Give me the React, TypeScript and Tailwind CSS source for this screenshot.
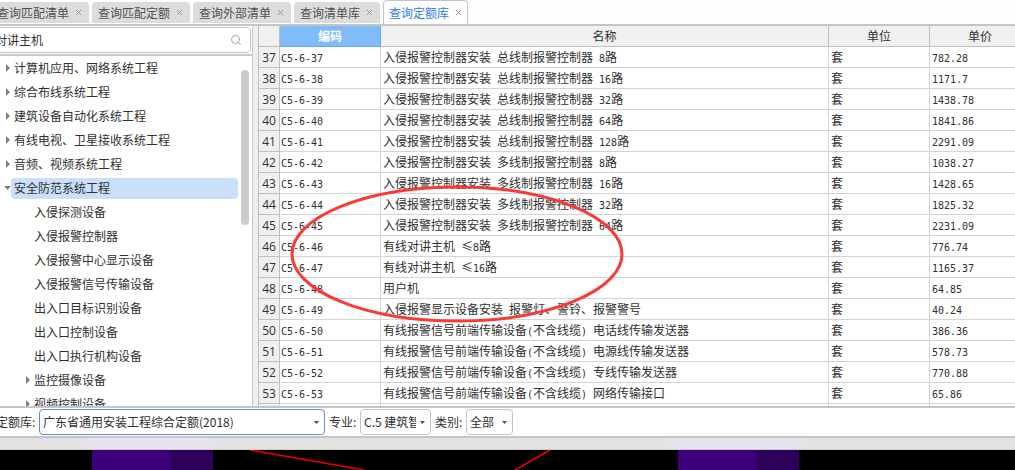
import React, { useState } from 'react';
import { LuSearch } from 'react-icons/lu';

const tabs = ['查询匹配清单', '查询匹配定额', '查询外部清单', '查询清单库', '查询定额库'];

type TreeNode = { label: string; level: number; arrow?: 'right' | 'down' };

const tree: TreeNode[] = [
  { label: '计算机应用、网络系统工程', level: 0, arrow: 'right' },
  { label: '综合布线系统工程', level: 0, arrow: 'right' },
  { label: '建筑设备自动化系统工程', level: 0, arrow: 'right' },
  { label: '有线电视、卫星接收系统工程', level: 0, arrow: 'right' },
  { label: '音频、视频系统工程', level: 0, arrow: 'right' },
  { label: '安全防范系统工程', level: 0, arrow: 'down' },
  { label: '入侵探测设备', level: 1 },
  { label: '入侵报警控制器', level: 1 },
  { label: '入侵报警中心显示设备', level: 1 },
  { label: '入侵报警信号传输设备', level: 1 },
  { label: '出入口目标识别设备', level: 1 },
  { label: '出入口控制设备', level: 1 },
  { label: '出入口执行机构设备', level: 1 },
  { label: '监控摄像设备', level: 1, arrow: 'right' },
  { label: '视频控制设备', level: 1, arrow: 'right' },
];

const rows: { no: number; name: string; price: string }[] = [
  { no: 37, name: '入侵报警控制器安装 总线制报警控制器 8路', price: '782.28' },
  { no: 38, name: '入侵报警控制器安装 总线制报警控制器 16路', price: '1171.7' },
  { no: 39, name: '入侵报警控制器安装 总线制报警控制器 32路', price: '1438.78' },
  { no: 40, name: '入侵报警控制器安装 总线制报警控制器 64路', price: '1841.86' },
  { no: 41, name: '入侵报警控制器安装 总线制报警控制器 128路', price: '2291.09' },
  { no: 42, name: '入侵报警控制器安装 多线制报警控制器 8路', price: '1038.27' },
  { no: 43, name: '入侵报警控制器安装 多线制报警控制器 16路', price: '1428.65' },
  { no: 44, name: '入侵报警控制器安装 多线制报警控制器 32路', price: '1825.32' },
  { no: 45, name: '入侵报警控制器安装 多线制报警控制器 64路', price: '2231.09' },
  { no: 46, name: '有线对讲主机 ≤8路', price: '776.74' },
  { no: 47, name: '有线对讲主机 ≤16路', price: '1165.37' },
  { no: 48, name: '用户机', price: '64.85' },
  { no: 49, name: '入侵报警显示设备安装 报警灯、警铃、报警警号', price: '40.24' },
  { no: 50, name: '有线报警信号前端传输设备(不含线缆) 电话线传输发送器', price: '386.36' },
  { no: 51, name: '有线报警信号前端传输设备(不含线缆) 电源线传输发送器', price: '578.73' },
  { no: 52, name: '有线报警信号前端传输设备(不含线缆) 专线传输发送器', price: '770.88' },
  { no: 53, name: '有线报警信号前端传输设备(不含线缆) 网络传输接口', price: '65.86' },
];

// half-width characters take exactly half of a full-width one
const CellText = ({ text }: { text: string }) => (
  <>
    {text.split(/([\x20-\x7e]+)/).map((part, i) =>
      i % 2 ? (
        <span
          key={i}
          className="font-['DejaVu_Sans_Mono',monospace] text-[10px] leading-none whitespace-pre"
        >
          {part}
        </span>
      ) : (
        part.split(/(≤)/).map((s, j) =>
          s === '≤' ? (
            <span key={j} className="inline-block w-3 text-center">≤</span>
          ) : (
            s
          )
        )
      )
    )}
  </>
);

const TreeArrow = ({ dir }: { dir?: 'right' | 'down' }) => (
  <svg width="7" height="8" viewBox="0 0 7 8" className="shrink-0 fill-[#808080]">
    {dir === 'right' && <path d="M2 0 L6 4 L2 8 Z" />}
    {dir === 'down' && <path d="M0 2 H7 L3.5 6 Z" />}
  </svg>
);

const Dropdown = ({
  id,
  label,
  options,
  className,
  labelClassName,
}: {
  id: string;
  label: string;
  options: string[];
  className: string;
  labelClassName: string;
}) => (
  <>
    <label htmlFor={id} className={`shrink-0 whitespace-nowrap ${labelClassName}`}>
      {label}
    </label>
    <div className={`relative shrink-0 ${className}`}>
      <select
        id={id}
        className="block h-[26px] w-full appearance-none rounded border border-inherit bg-transparent pr-3.5 pl-[3px] text-xs outline-none"
      >
        {options.map((o) => (
          <option key={o}>{o}</option>
        ))}
      </select>
      <svg
        width="5"
        height="3"
        viewBox="0 0 5 3"
        className="pointer-events-none absolute top-3 right-1.5 fill-[#505050]"
      >
        <path d="M0 0 H5 L2.5 3 Z" />
      </svg>
    </div>
  </>
);

const App = () => {
  const [activeTab, setActiveTab] = useState(4);
  const [keyword, setKeyword] = useState('对讲主机');
  const [selected, setSelected] = useState('安全防范系统工程');

  return (
    <div className="flex h-screen flex-col overflow-hidden bg-white font-['Noto_Sans_CJK_SC',sans-serif] text-xs text-[#303030]">
      <nav className="-ml-[9px] flex h-[26px] shrink-0 items-start gap-[3px] border-b-2 border-[#c3c5c8] bg-[#fefefe]">
        {tabs.map((tab, i) => (
          <button
            key={tab}
            type="button"
            onClick={() => setActiveTab(i)}
            className={
              i === activeTab
                ? 'flex h-6 shrink-0 items-center gap-1.5 rounded-t border-x border-t border-[#c3c5c8] bg-white px-[5px] text-[#2f80e8]'
                : 'mt-0.5 flex h-[21px] shrink-0 items-center gap-1.5 rounded-t bg-[#dcdcdc] pr-[7px] pl-1.5 text-[#505050]'
            }
          >
            {tab}
            <svg width="7" height="7" viewBox="0 0 7 7" className="stroke-[#9a9a9a]">
              <path d="M1 1 L6 6 M6 1 L1 6" />
            </svg>
          </button>
        ))}
      </nav>

      <main className="flex min-h-0 flex-1">
        <aside className="flex w-[253px] shrink-0 flex-col overflow-hidden border-r border-[#c6c6c6]">
          <div className="-ml-2 border-b-2 border-[#c9c9cd] pt-px pr-px pb-px">
            <div className="flex h-[26px] items-center rounded border border-[#c4c4c4] pr-2">
              <input
                aria-label="搜索"
                value={keyword}
                onChange={(e) => setKeyword(e.target.value)}
                className="min-w-0 flex-1 pl-0.5 outline-none"
              />
              <LuSearch className="size-3 text-[#a0a0a0]" />
            </div>
          </div>
          <div className="flex min-h-0 flex-1 overflow-hidden">
            <ul className="min-w-0 flex-1">
              {tree.map((node) => (
                <li
                  key={node.label}
                  className={`flex h-6 items-center ${node.level ? 'pl-6' : 'pl-1'}`}
                >
                  <TreeArrow dir={node.arrow} />
                  <button
                    type="button"
                    onClick={() => setSelected(node.label)}
                    className={`h-[21px] flex-1 rounded-sm pl-[3px] text-left whitespace-nowrap ${
                      selected === node.label ? 'bg-[#c9dffa]' : ''
                    }`}
                  >
                    {node.label}
                  </button>
                </li>
              ))}
            </ul>
            <div className="w-3.5 shrink-0 pt-3.5 pl-[3px]">
              <div className="h-[155px] w-2 rounded-full bg-[#cbcbcb]" />
            </div>
          </div>
        </aside>

        <div className="w-[5px] shrink-0 bg-[#efefef]" />

        <section className="relative min-w-0 flex-1 overflow-hidden border-l border-[#c0c0c0]">
          <table className="w-[calc(100%+16px)] table-fixed border-separate border-spacing-0">
            <colgroup>
              <col className="w-[21px]" />
              <col className="w-[101px]" />
              <col />
              <col className="w-[101px]" />
              <col className="w-[101px]" />
            </colgroup>
            <thead>
              <tr className="h-[21px] bg-[#f0f0f0] *:border-r *:border-b *:border-[#c0c0c0] *:p-0 *:leading-4 *:font-normal">
                <th></th>
                <th className="border-[#68a8ec]! bg-[#80bbfa] font-bold! text-white">编码</th>
                <th>名称</th>
                <th>单位</th>
                <th>单价</th>
              </tr>
            </thead>
            <tbody>
              {rows.map((row) => (
                <tr
                  key={row.no}
                  className="h-[21px] *:border-r *:border-b *:border-[#d4d4d4] *:p-0 *:leading-4 *:whitespace-nowrap"
                >
                  <th className="border-[#c0c0c0]! bg-[#f0f0f0] pt-0.5! text-center font-['Open_Sans',sans-serif] font-normal">
                    {row.no}
                  </th>
                  <td className="pl-px!">
                    <CellText text={`C5-6-${row.no}`} />
                  </td>
                  <td className="pl-0.5!">
                    <CellText text={row.name} />
                  </td>
                  <td className="pl-0.5!">套</td>
                  <td className="pl-0.5!">
                    <CellText text={row.price} />
                  </td>
                </tr>
              ))}
              <tr className="h-[21px] *:border-r *:border-[#d4d4d4]">
                <th className="bg-[#f0f0f0]"></th>
                <td></td>
                <td></td>
                <td></td>
                <td></td>
              </tr>
            </tbody>
          </table>
          {/* hand-drawn mark around the intercom rows */}
          <svg
            width="336"
            height="140"
            viewBox="0 0 336 140"
            className="pointer-events-none absolute top-[158px] left-[30px]"
          >
            <ellipse cx="168" cy="70" rx="165" ry="67" fill="none" stroke="#f93a37" strokeWidth="3" />
          </svg>
        </section>
      </main>

      <footer className="shrink-0">
        <div className="-ml-2 flex h-8 items-center border-y-2 border-[#c3c5c8] bg-white">
          <Dropdown
            id="library"
            label="定额库:"
            labelClassName="ml-1 w-[43px]"
            options={['广东省通用安装工程综合定额(2018)']}
            className="w-[286px] border-[#5f8bd8]"
          />
          <Dropdown
            id="major"
            label="专业:"
            labelClassName="ml-1 w-[31px]"
            options={['C.5 建筑智']}
            className="w-[71px] border-[#c4c4c4]"
          />
          <Dropdown
            id="category"
            label="类别:"
            labelClassName="ml-1 w-[31px]"
            options={['全部']}
            className="w-[47px] border-[#c4c4c4]"
          />
        </div>
        <div className="h-3 border-b border-[#d0d0d0] bg-[#e3e3e3]">
          <svg width="100%" height="11" className="block">
            <defs>
              <linearGradient id="glow">
                <stop offset="0" stopColor="#e9e3f0" stopOpacity="0" />
                <stop offset="0.15" stopColor="#e9e3f0" />
                <stop offset="0.8" stopColor="#e9e3f0" />
                <stop offset="1" stopColor="#e9e3f0" stopOpacity="0" />
              </linearGradient>
            </defs>
            <rect x="75" width="150" height="11" fill="url(#glow)" />
            <rect x="662" width="150" height="11" fill="url(#glow)" />
          </svg>
        </div>
        <svg width="100%" height="20" className="block bg-black">
          <rect x="92" width="78" height="20" fill="#3d007a" />
          <rect x="170" width="43" height="20" fill="#2d005a" />
          <rect x="678" width="78" height="20" fill="#3d007a" />
          <rect x="756" width="43" height="20" fill="#2d005a" />
          <path d="M250 0 L364 20 M515 20 L550 0" stroke="#f00000" strokeWidth="1.5" />
        </svg>
      </footer>
    </div>
  );
};

export default App;
